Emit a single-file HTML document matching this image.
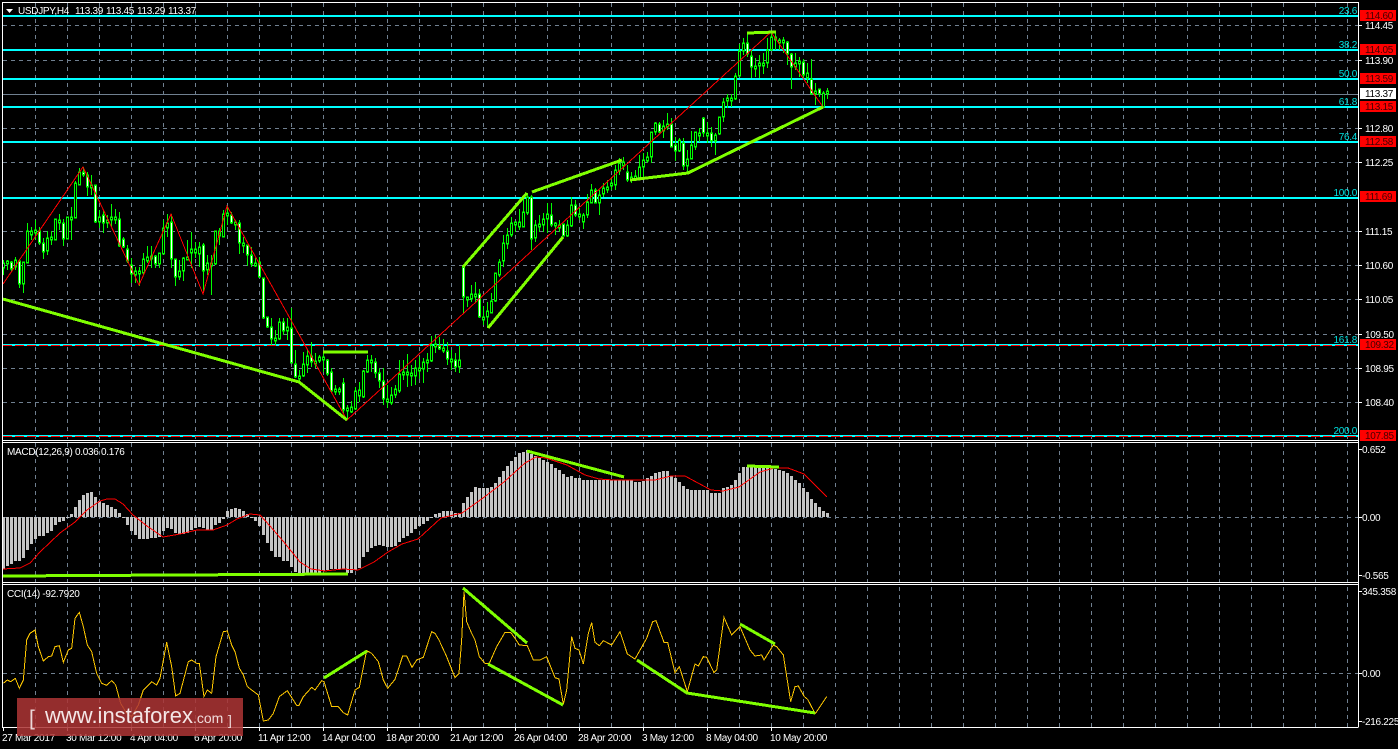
<!DOCTYPE html>
<html><head><meta charset="utf-8"><title>USDJPY,H4</title>
<style>
html,body{margin:0;padding:0;background:#000;width:1398px;height:749px;overflow:hidden}
svg{display:block}
text{font-family:"Liberation Sans",sans-serif;font-size:10px;letter-spacing:-.3px;fill:#fff}
.r{text-anchor:end;fill:#00e0e0}
.p{fill:#400}
.t{letter-spacing:-.3px}
</style></head><body>
<svg width="1398" height="749" viewBox="0 0 1398 749" xmlns="http://www.w3.org/2000/svg">
<rect width="1398" height="749" fill="#000"/>
<defs>
<path id="b" d="M3.5 264V267M7.5 262V263M15.5 261V266M23.5 263V283M27.5 232V262M31.5 232V234M35.5 231V232M47.5 239V250M51.5 238V239M55.5 220V239M59.5 221V222M67.5 218V238M71.5 218V219M75.5 184V217M79.5 173V184M91.5 186V187M99.5 218V221M107.5 221V222M111.5 218V219M115.5 218V219M135.5 272V274M139.5 272V273M143.5 260V272M147.5 258V260M151.5 257V258M159.5 254V263M163.5 229V253M167.5 224V227M179.5 272V276M183.5 259V270M187.5 258V259M191.5 250V252M195.5 250V252M199.5 248V253M207.5 264V269M211.5 264V265M215.5 232V263M219.5 232V235M223.5 215V236M227.5 214V215M235.5 223V224M243.5 244V245M255.5 264V265M275.5 339V340M279.5 323V338M287.5 328V330M299.5 377V378M303.5 365V375M307.5 357V364M315.5 362V363M319.5 358V360M323.5 358V359M335.5 390V391M339.5 390V391M347.5 409V410M351.5 408V411M355.5 392V408M359.5 391V395M363.5 372V396M367.5 361V371M371.5 361V362M387.5 400V401M391.5 396V402M395.5 390V394M399.5 375V390M403.5 373V374M407.5 373V374M411.5 374V375M415.5 369V375M419.5 369V370M423.5 363V368M427.5 361V362M431.5 346V360M435.5 345V346M443.5 349V350M451.5 360V361M459.5 361V366M467.5 298V299M471.5 295V298M475.5 295V296M483.5 318V319M487.5 312V316M491.5 302V312M495.5 274V300M499.5 263V274M503.5 244V260M507.5 236V243M511.5 224V234M515.5 223V224M519.5 223V226M523.5 213V226M527.5 198V212M535.5 226V237M539.5 225V226M543.5 220V224M547.5 215V218M555.5 224V225M559.5 226V227M567.5 226V235M571.5 206V225M579.5 215V216M583.5 216V221M587.5 203V214M591.5 191V202M599.5 196V202M603.5 189V193M607.5 188V189M611.5 184V185M615.5 171V184M619.5 164V170M623.5 163V165M631.5 178V179M635.5 177V178M639.5 168V177M643.5 161V166M647.5 158V160M651.5 133V156M655.5 124V131M663.5 127V130M667.5 125V126M679.5 141V150M687.5 160V165M691.5 146V158M695.5 133V146M699.5 134V135M707.5 134V135M715.5 136V140M719.5 118V133M723.5 103V116M727.5 99V100M731.5 99V100M735.5 77V98M739.5 52V75M743.5 44V50M755.5 67V68M759.5 64V65M763.5 64V65M767.5 51V62M771.5 38V49M779.5 41V42M783.5 41V42M795.5 64V66M799.5 62V63M807.5 74V77M815.5 92V93M823.5 94V106M827.5 92V93"/>
<path id="w" d="M11.5 263V268M19.5 262V283M39.5 232V242M43.5 244V251M63.5 224V238M83.5 173V174M87.5 176V186M95.5 186V221M103.5 216V222M119.5 220V245M123.5 240V246M127.5 250V260M131.5 266V273M155.5 257V263M171.5 223V258M175.5 260V276M203.5 246V270M231.5 216V222M239.5 224V242M247.5 246V254M251.5 256V263M259.5 263V276M263.5 279V317M267.5 318V326M271.5 328V338M283.5 323V330M291.5 329V362M295.5 365V376M311.5 357V361M327.5 361V373M331.5 373V390M343.5 384V409M375.5 363V372M379.5 374V380M383.5 382V398M439.5 347V348M447.5 352V358M455.5 361V366M463.5 268V296M479.5 295V316M531.5 198V238M551.5 216V224M563.5 225V235M575.5 206V214M595.5 191V202M627.5 173V179M659.5 125V131M671.5 125V146M675.5 146V150M683.5 144V165M703.5 119V132M711.5 134V140M747.5 44V53M751.5 57V66M775.5 38V39M787.5 43V53M791.5 55V66M803.5 63V74M811.5 80V93M819.5 90V93"/>
</defs>
<g shape-rendering="crispEdges" fill="none">
<path stroke="#708090" stroke-dasharray="4 4" d="M35.5 3V727M67.5 3V727M99.5 3V727M131.5 3V727M163.5 3V727M195.5 3V727M227.5 3V727M259.5 3V727M291.5 3V727M323.5 3V727M355.5 3V727M387.5 3V727M419.5 3V727M451.5 3V727M483.5 3V727M515.5 3V727M547.5 3V727M579.5 3V727M611.5 3V727M643.5 3V727M675.5 3V727M707.5 3V727M739.5 3V727M771.5 3V727M803.5 3V727M835.5 3V727M867.5 3V727M899.5 3V727M931.5 3V727M963.5 3V727M995.5 3V727M1027.5 3V727M1059.5 3V727M1091.5 3V727M1123.5 3V727M1155.5 3V727M1187.5 3V727M1219.5 3V727M1251.5 3V727M1283.5 3V727M1315.5 3V727M1347.5 3V727"/>
<path stroke="#708090" stroke-dasharray="4 4" d="M3 25.5H1358M3 60.5H1358M3 128.5H1358M3 162.5H1358M3 231.5H1358M3 265.5H1358M3 299.5H1358M3 334.5H1358M3 368.5H1358M3 402.5H1358M3 517.5H1358M3 673.5H1358"/>
<path stroke="#708090" d="M3 94.5H1358"/>
<path stroke="#0ff" stroke-width="2" d="M3 16H1358M3 50H1358M3 79H1358M3 107H1358M3 142H1358M3 198H1358M3 345H1358M3 436H1358"/>
<path stroke="#f00" stroke-dasharray="9 3" d="M3 345.5H1358M3 436.5H1358"/>
<!-- MACD bars -->
<path stroke="#c4c4c4" stroke-width="3" d="M3.5 517V569M7.5 517V566M11.5 517V564M15.5 517V561M19.5 517V561M23.5 517V558M27.5 517V550M31.5 517V544M35.5 517V539M39.5 517V536M43.5 517V536M47.5 517V533M51.5 517V531M55.5 517V525M59.5 517V522M63.5 517V521M67.5 517V518M71.5 517V514M75.5 517V507M79.5 517V500M83.5 517V495M87.5 517V493M91.5 517V492M95.5 517V497M99.5 517V501M103.5 517V503M107.5 517V505M111.5 517V507M115.5 517V509M119.5 517V513M123.5 517V518M127.5 517V525M131.5 517V531M135.5 517V535M139.5 517V539M143.5 517V539M147.5 517V539M151.5 517V538M155.5 517V538M159.5 517V537M163.5 517V531M167.5 517V528M171.5 517V529M175.5 517V533M179.5 517V534M183.5 517V534M187.5 517V533M191.5 517V530M195.5 517V528M199.5 517V527M203.5 517V528M207.5 517V530M211.5 517V530M215.5 517V525M219.5 517V523M223.5 517V519M227.5 517V511M231.5 517V509M235.5 517V508M239.5 517V509M243.5 517V511M247.5 517V514M251.5 517V518M255.5 517V521M259.5 517V526M263.5 517V535M267.5 517V543M271.5 517V551M275.5 517V557M279.5 517V557M283.5 517V561M287.5 517V561M291.5 517V567M295.5 517V572M299.5 517V575M303.5 517V575M307.5 517V575M311.5 517V574M315.5 517V573M319.5 517V573M323.5 517V571M327.5 517V570M331.5 517V569M335.5 517V569M339.5 517V569M343.5 517V569M347.5 517V573M351.5 517V573M355.5 517V570M359.5 517V568M363.5 517V557M367.5 517V552M371.5 517V548M375.5 517V546M379.5 517V545M383.5 517V546M387.5 517V547M391.5 517V547M395.5 517V546M399.5 517V542M403.5 517V538M407.5 517V536M411.5 517V533M415.5 517V529M419.5 517V526M423.5 517V524M427.5 517V521M431.5 517V518M435.5 517V514M439.5 517V513M443.5 517V511M447.5 517V511M451.5 517V511M455.5 517V513M459.5 517V513M463.5 517V503M467.5 517V497M471.5 517V492M475.5 517V487M479.5 517V488M483.5 517V488M487.5 517V488M491.5 517V487M495.5 517V483M499.5 517V477M503.5 517V471M507.5 517V466M511.5 517V461M515.5 517V457M519.5 517V453M523.5 517V452M527.5 517V450M531.5 517V454M535.5 517V456M539.5 517V458M543.5 517V460M547.5 517V462M551.5 517V464M555.5 517V468M559.5 517V470M563.5 517V474M567.5 517V477M571.5 517V476M575.5 517V478M579.5 517V478M583.5 517V480M587.5 517V480M591.5 517V480M595.5 517V480M599.5 517V480M603.5 517V480M607.5 517V480M611.5 517V480M615.5 517V480M619.5 517V480M623.5 517V480M627.5 517V480M631.5 517V480M635.5 517V482M639.5 517V482M643.5 517V481M647.5 517V478M651.5 517V476M655.5 517V473M659.5 517V472M663.5 517V471M667.5 517V471M671.5 517V476M675.5 517V478M679.5 517V482M683.5 517V486M687.5 517V489M691.5 517V490M695.5 517V490M699.5 517V490M703.5 517V490M707.5 517V490M711.5 517V493M715.5 517V493M719.5 517V493M723.5 517V488M727.5 517V487M731.5 517V485M735.5 517V480M739.5 517V473M743.5 517V467M747.5 517V467M751.5 517V467M755.5 517V467M759.5 517V467M763.5 517V468M767.5 517V468M771.5 517V468M775.5 517V469M779.5 517V470M783.5 517V471M787.5 517V473M791.5 517V476M795.5 517V480M799.5 517V483M803.5 517V488M807.5 517V492M811.5 517V499M815.5 517V503M819.5 517V507M823.5 517V511M827.5 517V513"/>
<!-- wicks -->
<path stroke="#0f0" d="M3.5 260V275M7.5 260V270M11.5 261V271M15.5 257V270M19.5 259V288M23.5 262V293M27.5 223V263M31.5 227V240M35.5 220V240M39.5 227V245M43.5 238V259M47.5 231V255M51.5 231V245M55.5 219V240M59.5 214V230M63.5 219V246M67.5 217V239M71.5 207V240M75.5 181V218M79.5 168V185M83.5 167V177M87.5 172V196M91.5 175V195M95.5 185V223M99.5 210V228M103.5 210V233M107.5 215V228M111.5 204V227M115.5 209V224M119.5 212V247M123.5 237V248M127.5 245V263M131.5 258V283M135.5 267V283M139.5 267V286M143.5 253V275M147.5 246V263M151.5 246V268M155.5 255V268M159.5 253V268M163.5 220V254M167.5 214V237M171.5 214V268M175.5 259V286M179.5 260V280M183.5 257V281M187.5 240V260M191.5 232V268M195.5 242V258M199.5 242V267M203.5 243V293M207.5 255V275M211.5 255V295M215.5 231V265M219.5 228V245M223.5 210V237M227.5 206V225M231.5 212V224M235.5 220V230M239.5 220V254M243.5 237V253M247.5 245V266M251.5 247V267M255.5 258V267M259.5 257V278M263.5 278V319M267.5 317V328M271.5 318V345M275.5 330V345M279.5 318V340M283.5 318V335M287.5 318V340M291.5 308V363M295.5 350V378M299.5 370V382M303.5 352V377M307.5 350V373M311.5 342V367M315.5 353V368M319.5 355V363M323.5 353V372M327.5 359V376M331.5 368V392M335.5 385V395M339.5 387V395M343.5 378V413M347.5 405V420M351.5 401V413M355.5 387V410M359.5 382V402M363.5 370V398M367.5 355V373M371.5 355V372M375.5 358V378M379.5 368V388M383.5 368V405M387.5 385V408M391.5 387V405M395.5 385V398M399.5 360V393M403.5 360V380M407.5 354V387M411.5 365V386M415.5 360V385M419.5 357V379M423.5 358V383M427.5 353V372M431.5 336V362M435.5 335V353M439.5 337V350M443.5 339V353M447.5 342V365M451.5 350V370M455.5 353V372M459.5 346V373M463.5 267V313M467.5 297V307M471.5 285V302M475.5 282V302M479.5 289V318M483.5 306V325M487.5 302V328M491.5 293V313M495.5 273V302M499.5 259V277M503.5 235V267M507.5 228V249M511.5 217V237M515.5 222V232M519.5 209V230M523.5 195V227M527.5 193V215M531.5 195V250M535.5 220V242M539.5 215V232M543.5 213V232M547.5 203V233M551.5 203V227M555.5 222V235M559.5 220V232M563.5 224V236M567.5 220V237M571.5 197V227M575.5 200V217M579.5 208V220M583.5 213V229M587.5 194V218M591.5 184V203M595.5 188V203M599.5 190V215M603.5 183V197M607.5 180V193M611.5 177V190M615.5 165V190M619.5 158V175M623.5 157V170M627.5 165V182M631.5 172V183M635.5 170V181M639.5 155V180M643.5 153V177M647.5 152V163M651.5 132V163M655.5 122V135M659.5 122V133M663.5 120V138M667.5 113V130M671.5 118V147M675.5 137V161M679.5 138V152M683.5 138V170M687.5 150V173M691.5 131V159M695.5 132V150M699.5 128V142M703.5 117V137M707.5 122V143M711.5 127V147M715.5 133V155M719.5 117V135M723.5 98V122M727.5 94V108M731.5 94V107M735.5 73V100M739.5 44V77M743.5 38V55M747.5 33V57M751.5 50V78M755.5 58V77M759.5 55V78M763.5 53V74M767.5 38V68M771.5 32V51M775.5 32V50M779.5 38V50M783.5 37V53M787.5 41V65M791.5 53V89M795.5 53V70M799.5 57V77M803.5 59V78M807.5 63V83M811.5 59V95M815.5 83V105M819.5 89V97M823.5 91V108M827.5 88V99"/>
<!-- candle bodies -->
<use href="#b" stroke="#0f0" stroke-width="3" stroke-linecap="square"/>
<use href="#w" stroke="#0f0" stroke-width="3" stroke-linecap="square"/>
<use href="#b" stroke="#000" stroke-width="1"/>
<use href="#w" stroke="#fff" stroke-width="1"/>
<!-- zigzag -->
<path stroke="#f00" d="M3 284L83 167L139 285L171 214L203 294L227 206L347 420L771 32L823 107"/>
<!-- macd signal -->
<path stroke="#f00" d="M3 569L20 568L30 563L40 552L60 533L75 522L87 510L100 501L107 499L115 499L123 504L133 515L147 526L163 537L180 534L197 530L213 530L227 525L237 519L250 514L260 515L270 526L283 541L300 562L311 569L325 571L343 569L358 570L374 562L388 552L402 544L418 539L441 518L462 513L483 498L504 482L525 463L536 457L546 458L567 465L585 475L599 479L613 480L641 480L655 480L671 476L685 476L711 490L723 491L739 487L760 472L774 468L788 468L804 474L827 497"/>
<!-- cci -->
<polyline transform="translate(0,580) scale(.33333)" fill="none" stroke="#ffc800" stroke-width="3" points="10,310 22,300 32,305 46,295 58,325 70,300 80,180 90,160 105,150 115,200 130,243 145,230 155,228 165,200 178,197 190,247 205,210 215,205 225,115 238,97 250,140 262,195 275,215 290,280 305,310 320,316 335,302 347,315 362,370 380,400 395,410 415,375 430,330 455,305 470,315 480,295 500,187 515,260 527,348 540,340 565,245 575,240 590,250 598,250 612,350 622,330 635,340 648,230 670,155 682,153 695,195 705,215 718,265 730,285 742,320 775,345 790,423 805,420 820,400 838,350 862,332 890,376 897,376 910,350 935,322 945,330 965,302 972,305 995,380 1015,380 1030,398 1043,405 1065,330 1078,322 1100,212 1115,220 1135,245 1150,300 1163,325 1185,298 1208,228 1220,228 1236,262 1250,240 1270,232 1295,155 1305,160 1320,185"/>
<polyline transform="translate(440,580) scale(.33333)" fill="none" stroke="#ffc800" stroke-width="3" points="0,187 20,230 45,293 57,280 65,180 72,35 80,125 95,160 105,180 118,230 135,250 148,250 170,200 195,157 212,157 225,175 238,195 262,197 280,240 300,240 320,230 345,293 357,297 370,373 380,330 395,170 405,205 417,210 430,252 445,160 455,128 465,187 478,197 490,182 515,195 540,155 562,222 585,237 620,175 638,125 648,122 672,187 683,187 705,278 718,260 742,335 765,252 775,258 790,230 800,232 822,278 830,270 852,112 875,165 900,140 930,210 945,228 965,225 972,240 1000,195 1010,200 1030,225 1052,365 1065,320 1075,318 1093,350 1103,358 1125,400 1130,395 1160,350"/>
<!-- green trend lines -->
<path stroke="#7fff00" stroke-width="3" d="M3 299L299 382L347 420M323 352H368M463 267L527 193M488 328L563 237M532 192L622 160M630 180L688 173L823 107M747 33L776 32M3 576L348 574M527 451L624 477M747 466L779 467M324 678L367 651M463 588L527 643M488 664L563 705M637 660L687 693L815 713M740 624L775 644"/>
<!-- frame -->
<path stroke="#fff" d="M2 2.5H1358.5M2.5 2V727M1358.5 2V727M2 440.5H1358M2 442.5H1358M2 582.5H1358M2 584.5H1358M2 727.5H1358.5"/>
<path stroke="#fff" d="M1359 25.5h3M1359 60.5h3M1359 128.5h3M1359 162.5h3M1359 231.5h3M1359 265.5h3M1359 299.5h3M1359 334.5h3M1359 368.5h3M1359 402.5h3M1359 449.5h3M1359 517.5h3M1359 575.5h3M1359 591.5h3M1359 673.5h3M1359 721.5h3M3.5 728v3M67.5 728v3M131.5 728v3M195.5 728v3M259.5 728v3M323.5 728v3M387.5 728v3M451.5 728v3M515.5 728v3M579.5 728v3M643.5 728v3M707.5 728v3M771.5 728v3"/>
<!-- price tags -->
<path fill="#f00" d="M1360 10h36v11h-36zM1360 44h36v11h-36zM1360 73h36v11h-36zM1360 101h36v11h-36zM1360 136h36v11h-36zM1360 191h36v11h-36zM1360 339h36v11h-36zM1360 430h36v11h-36z"/>
<path fill="#fff" d="M1360 88h36v11h-36z"/>
</g>
<polygon points="6,9 13,9 9.5,13" fill="#fff"/>
<text x="18" y="14">USDJPY,H4</text><text x="75" y="14">113.39</text><text x="106" y="14">113.45</text><text x="137" y="14">113.29</text><text x="168" y="14">113.37</text>
<text x="7" y="455">MACD(12,26,9) 0.036 0.176</text>
<text x="7" y="597">CCI(14) -92.7920</text>
<text class="r" x="1357" y="14">23.6</text><text class="r" x="1357" y="48">38.2</text><text class="r" x="1357" y="77">50.0</text><text class="r" x="1357" y="105">61.8</text><text class="r" x="1357" y="140">76.4</text><text class="r" x="1357" y="196">100.0</text><text class="r" x="1357" y="343">161.8</text><text class="r" x="1357" y="434">200.0</text>
<text class="p" x="1365" y="19">114.60</text><text class="p" x="1365" y="53">114.05</text><text class="p" x="1365" y="82">113.59</text><text class="p" x="1365" y="110">113.15</text><text class="p" x="1365" y="145">112.58</text><text class="p" x="1365" y="200">111.69</text><text class="p" x="1365" y="348">109.32</text><text class="p" x="1365" y="439">107.85</text>
<text x="1365" y="97" style="fill:#000">113.37</text>
<text x="1365" y="29">114.45</text><text x="1365" y="64">113.90</text><text x="1365" y="132">112.80</text><text x="1365" y="166">112.25</text><text x="1365" y="235">111.15</text><text x="1365" y="269">110.60</text><text x="1365" y="303">110.05</text><text x="1365" y="338">109.50</text><text x="1365" y="372">108.95</text><text x="1365" y="406">108.40</text>
<text x="1362" y="453">0.652</text><text x="1362" y="521">0.00</text><text x="1362" y="579">-0.565</text><text x="1362" y="595">345.358</text><text x="1362" y="677">0.00</text><text x="1362" y="725">-216.225</text>
<g class="tm"><text class="t" x="2" y="741">27 Mar 2017</text><text class="t" x="66" y="741">30 Mar 12:00</text><text class="t" x="130" y="741">4 Apr 04:00</text><text class="t" x="194" y="741">6 Apr 20:00</text><text class="t" x="258" y="741">11 Apr 12:00</text><text class="t" x="322" y="741">14 Apr 04:00</text><text class="t" x="386" y="741">18 Apr 20:00</text><text class="t" x="450" y="741">21 Apr 12:00</text><text class="t" x="514" y="741">26 Apr 04:00</text><text class="t" x="578" y="741">28 Apr 20:00</text><text class="t" x="642" y="741">3 May 12:00</text><text class="t" x="706" y="741">8 May 04:00</text><text class="t" x="770" y="741">10 May 20:00</text></g>
<!-- logo -->
<rect x="17" y="698" width="226" height="38" fill="#ac3434" opacity=".86"/>
<text x="29" y="725" style="font-size:21px;letter-spacing:0;fill:#ecd8d8;font-weight:normal">[</text>
<text x="45" y="723" style="font-size:22px;letter-spacing:0;fill:#f4e6e6">www.instaforex</text>
<text x="193" y="723" style="font-size:14px;letter-spacing:0;fill:#f0dcdc">.com</text>
<text x="228" y="725" style="font-size:14px;letter-spacing:0;fill:#ecd8d8">]</text>
</svg>
</body></html>
